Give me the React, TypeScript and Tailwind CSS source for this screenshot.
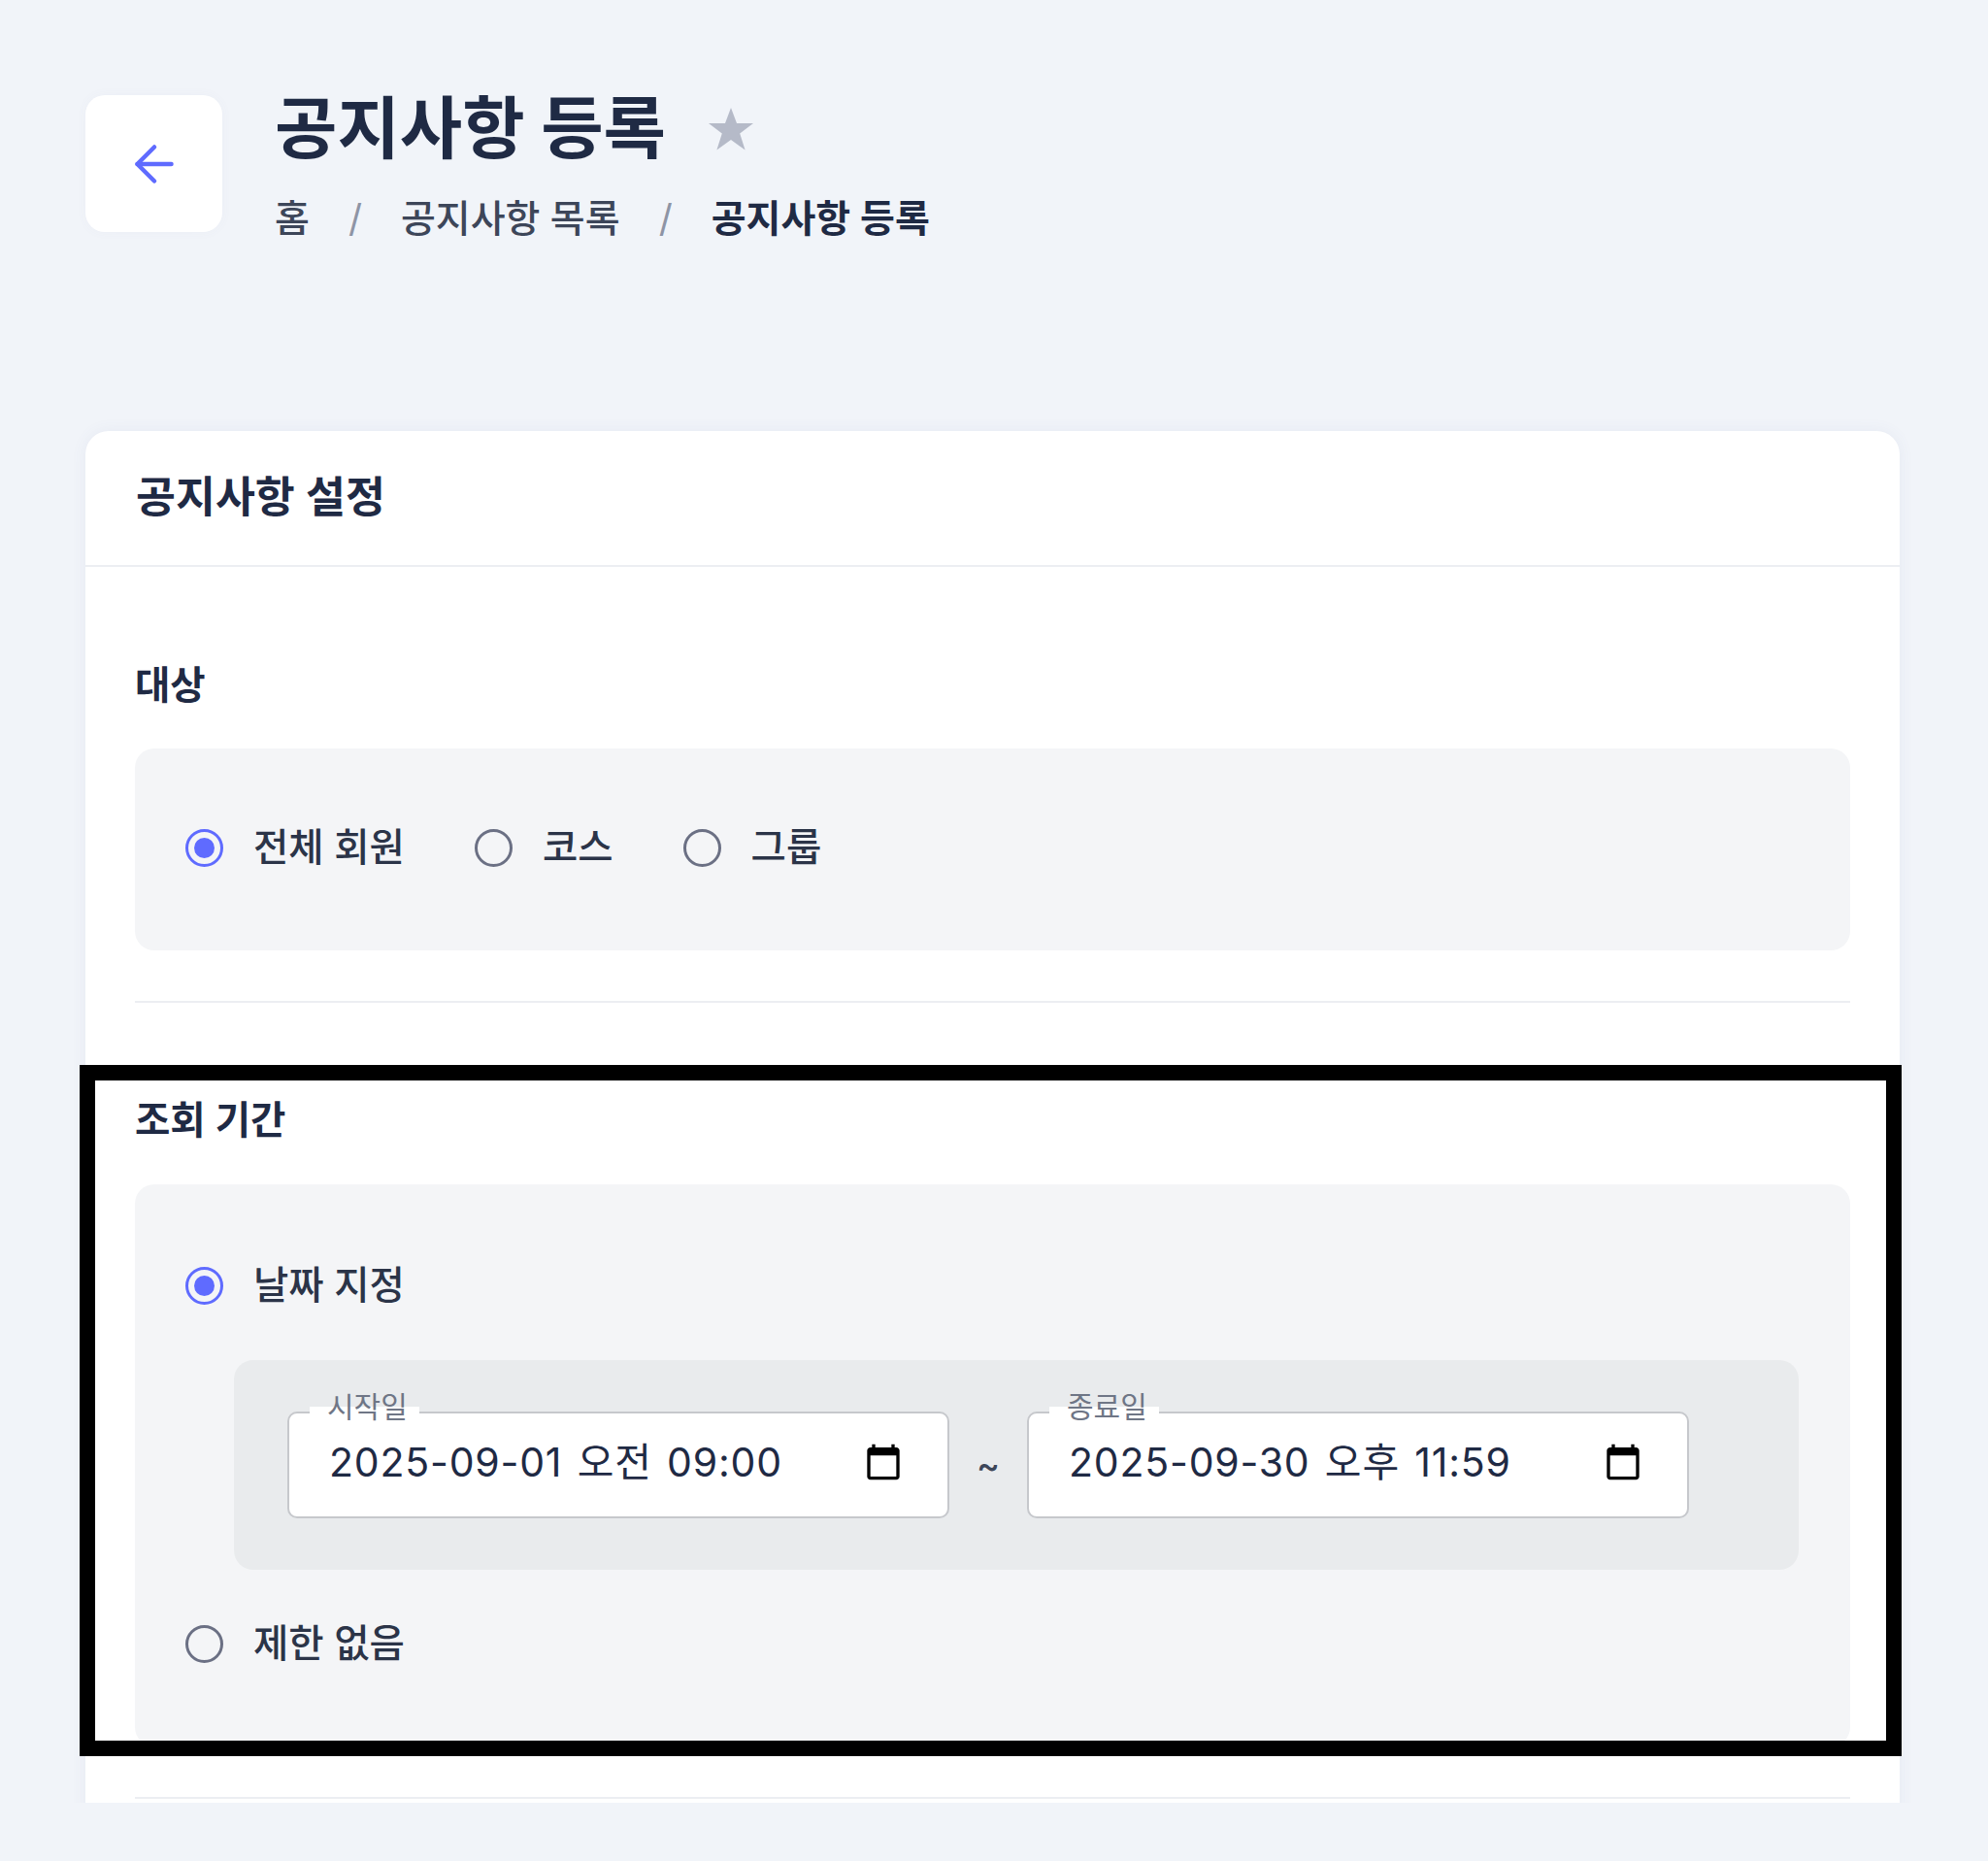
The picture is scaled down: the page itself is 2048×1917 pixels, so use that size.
import { ArrowLeft } from "lucide-react";

const font = "font-['Inter','Noto_Sans_CJK_KR',sans-serif]";

const Radio = ({ label, checked }: { label: string; checked?: boolean }) => (
  <label className="flex h-12 items-center gap-[31px]">
    {checked ? (
      <span className="flex size-[39px] items-center justify-center rounded-full border-[3px] border-[#5f6bff]">
        <span className="size-[21px] rounded-full bg-[#5f6bff]" />
      </span>
    ) : (
      <span className="size-[39px] rounded-full border-[3px] border-[#6b7084]" />
    )}
    <span className="text-[39.5px] leading-[48px] font-medium text-[#2b3448]">{label}</span>
  </label>
);

const DateField = ({ label, value }: { label: string; value: string }) => (
  <div className="relative flex h-[110px] w-[682px] items-center justify-between rounded-[10px] border-2 border-[#c6c8cc] bg-white pr-[46px] pb-[6px] pl-[41px]">
    <span className="absolute -top-[27px] left-[21px] bg-linear-to-b from-transparent from-50% to-white to-50% pr-[12px] pl-[18px] text-[30px] leading-10 text-[#6f7686]">
      {label}
    </span>
    <span className="text-[41px] leading-[48px] tracking-[0.8px] text-[#1f2a44] [word-spacing:3px]">{value}</span>
    <svg viewBox="0 0 24 24" className="size-10 fill-black">
      <path d="M20 3h-1V1h-2v2H7V1H5v2H4c-1.100 0-2 .9-2 2v16c0 1.100.9 2 2 2h16c1.100 0 2-.9 2-2V5c0-1.100-.9-2-2-2zm0 18H4V8h16v13z" />
    </svg>
  </div>
);

export default function App() {
  return (
    <div className={`${font} relative h-[1917px] overflow-hidden bg-[#f1f4f9]`}>
      <div className="h-[1857px] overflow-hidden pt-[98px] pr-[91px] pl-[88px]">
        <div className="flex items-start gap-[54px]">
          <button className="flex size-[141px] items-center justify-center rounded-[20px] bg-white shadow-[0_0_12px_rgba(90,100,160,0.04)]">
            <ArrowLeft className="size-[60px] text-[#5f6bff]" strokeWidth={1.8} />
          </button>
          <div>
            <div className="flex h-[70px] items-center gap-[43px]">
              <h1 className="text-[70px] leading-[70px] font-bold text-[#1f2a44]">공지사항 등록</h1>
              <svg viewBox="0 0 24 24" className="size-[48px] fill-[#b5bac8]">
                <path d="M12 1l3 8h8.500l-6.900 5.200 2.700 8.600L12 17.500l-7.300 5.300 2.700-8.600L.5 9H9z" />
              </svg>
            </div>
            <div className="mt-[33px] flex items-center text-[39px] leading-[48px] font-medium text-[#3d4659]">
              <span>홈</span>
              <span className="mx-[40px] font-normal text-[#8e94a5]">/</span>
              <span>공지사항 목록</span>
              <span className="mx-[40px] font-normal text-[#8e94a5]">/</span>
              <span className="font-semibold text-[#1f2a44]">공지사항 등록</span>
            </div>
          </div>
        </div>

        <div className="mt-[195px] rounded-t-[24px] bg-white shadow-[0_0_16px_rgba(90,100,160,0.07)]">
          <div className="flex h-[140px] items-center border-b-2 border-[#eceef2] px-[52px] pb-[2px]">
            <h2 className="text-[44.5px] leading-[56px] font-semibold text-[#1f2a44]">공지사항 설정</h2>
          </div>
          <div className="px-[51px] pb-[100px]">
            <section className="border-b-2 border-[#eceef2] pt-[98px] pb-[52px]">
              <h3 className="mb-[41px] text-[39.5px] leading-[48px] font-semibold text-[#1f2a44]">대상</h3>
              <div className="flex gap-[72px] rounded-[20px] bg-[#f4f5f7] pt-[78px] pr-[53px] pb-[82px] pl-[52px]">
                <Radio label="전체 회원" checked />
                <Radio label="코스" />
                <Radio label="그룹" />
              </div>
            </section>
            <section className="border-b-2 border-[#eceef2] pt-[97px] pb-[52px]">
              <h3 className="mb-[42px] text-[39.5px] leading-[48px] font-semibold text-[#1f2a44]">조회 기간</h3>
              <div className="flex flex-col rounded-[20px] bg-[#f4f5f7] pt-[80px] pr-[53px] pb-[82px] pl-[52px]">
                <Radio label="날짜 지정" checked />
                <div className="mt-[53px] mb-[52px] ml-[50px] flex items-center rounded-[20px] bg-[#e9ebed] px-[55px] py-[53px]">
                  <DateField label="시작일" value="2025-09-01 오전 09:00" />
                  <span className="w-[80px] text-center text-[36px] font-medium text-[#3d4659]">~</span>
                  <DateField label="종료일" value="2025-09-30 오후 11:59" />
                </div>
                <Radio label="제한 없음" />
              </div>
            </section>
          </div>
        </div>
      </div>
      <div className="pointer-events-none absolute top-[1097px] left-[82px] h-[712px] w-[1877px] border-16 border-black" />
    </div>
  );
}
